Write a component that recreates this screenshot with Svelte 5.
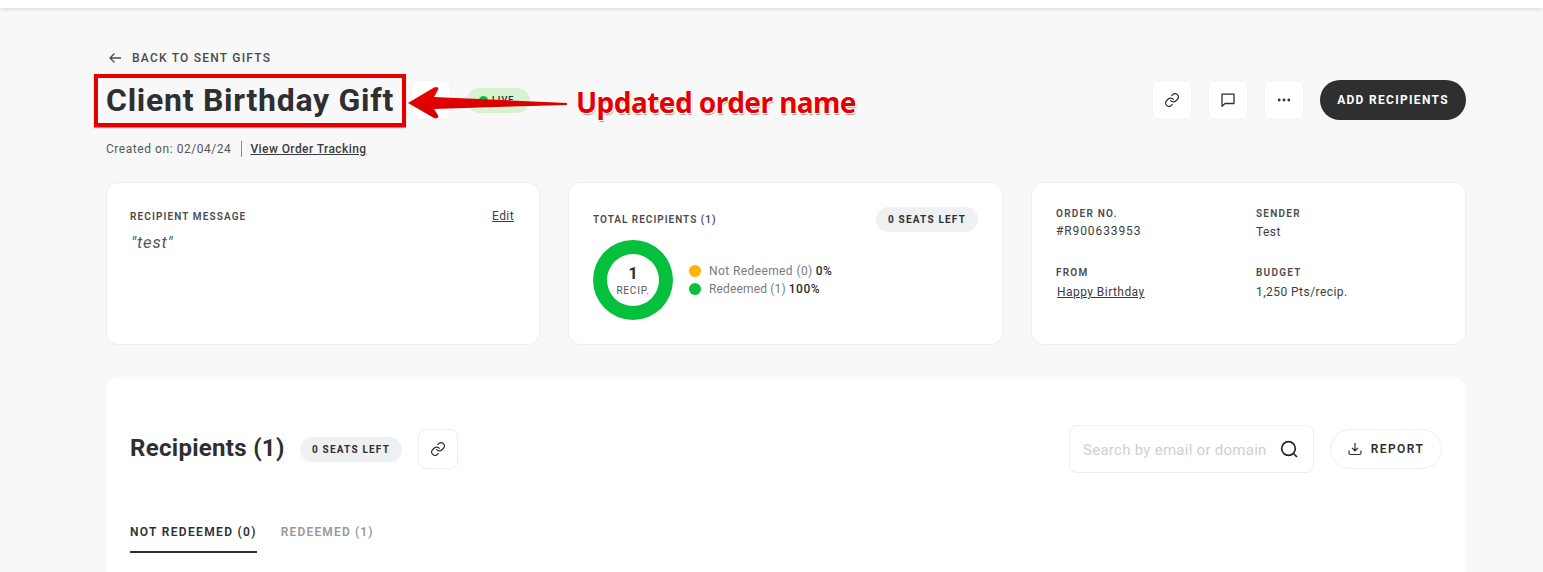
<script>
  const legend = [
    { label: 'Not Redeemed (0)', pct: '0%', color: '#ffb400' },
    { label: 'Redeemed (1)', pct: '100%', color: '#04c03c' }
  ];
</script>

<div class="page">
  <header class="topbar"></header>
  <main class="content">
    <a class="back" href="#back">
      <svg width="14" height="12" viewBox="0 0 14 12" fill="none" stroke="#4a4b4f" stroke-width="1.3"><path d="M13 6H2M6.5 1.5 2 6l4.5 4.5" /></svg>
      <span>BACK TO SENT GIFTS</span>
    </a>

    <div class="title-row">
      <div class="title-left">
        <h1>Client Birthday Gift</h1>
        <button class="icon-btn" aria-label="Edit"></button>
        <span class="live"><i></i>LIVE</span>
      </div>
      <div class="actions">
        <button class="icon-btn" aria-label="Copy link">
          <svg width="16" height="16" viewBox="0 0 24 24" fill="none" stroke="#2e2f31" stroke-width="1.8" stroke-linecap="round"><path d="M10 13a5 5 0 0 0 7.5.5l3-3a5 5 0 0 0-7-7l-1.7 1.7" /><path d="M14 11a5 5 0 0 0-7.5-.5l-3 3a5 5 0 0 0 7 7l1.7-1.7" /></svg>
        </button>
        <button class="icon-btn" aria-label="Comment">
          <svg width="16" height="16" viewBox="0 0 16 16" fill="none" stroke="#2e2f31" stroke-width="1.3" stroke-linejoin="round"><path d="M2 2.200h12v9.300H5L2 14.200z" /></svg>
        </button>
        <button class="icon-btn" aria-label="More">
          <svg width="14" height="4" viewBox="0 0 14 4" fill="#2e2f31"><circle cx="2.2" cy="2" r="1.4" /><circle cx="7" cy="2" r="1.4" /><circle cx="11.8" cy="2" r="1.4" /></svg>
        </button>
        <button class="primary">ADD RECIPIENTS</button>
      </div>
    </div>

    <div class="meta">
      <span class="created">Created on: 02/04/24</span>
      <a href="#track">View Order Tracking</a>
    </div>

    <section class="cards">
      <article class="card message">
        <div class="card-head">
          <span class="label">RECIPIENT MESSAGE</span>
          <a class="edit" href="#edit">Edit</a>
        </div>
        <p>"test"</p>
      </article>

      <article class="card totals">
        <div class="totals-head">
          <span class="label">TOTAL RECIPIENTS (1)</span>
          <span class="pill">0 SEATS LEFT</span>
        </div>
        <div class="chart-row">
          <div class="donut">
            <div class="hole"><b>1</b><small>RECIP.</small></div>
          </div>
          <ul>
            {#each legend as item}
              <li>
                <i style="background:{item.color}"></i>
                <span>{item.label}</span>
                <b>{item.pct}</b>
              </li>
            {/each}
          </ul>
        </div>
      </article>

      <article class="card details">
        <div><span class="label">ORDER NO.</span><p class="order-no">#R900633953</p></div>
        <div><span class="label">SENDER</span><p>Test</p></div>
        <div><span class="label">FROM</span><p><a href="#from">Happy Birthday</a></p></div>
        <div><span class="label">BUDGET</span><p>1,250 Pts/recip.</p></div>
      </article>
    </section>

    <section class="recipients">
      <div class="rec-head">
        <div class="rec-left">
          <h2>Recipients (1)</h2>
          <span class="pill">0 SEATS LEFT</span>
          <button class="icon-btn outlined" aria-label="Copy link">
            <svg width="16" height="16" viewBox="0 0 24 24" fill="none" stroke="#2e2f31" stroke-width="1.8" stroke-linecap="round"><path d="M10 13a5 5 0 0 0 7.5.5l3-3a5 5 0 0 0-7-7l-1.7 1.7" /><path d="M14 11a5 5 0 0 0-7.5-.5l-3 3a5 5 0 0 0 7 7l1.7-1.7" /></svg>
          </button>
        </div>
        <div class="rec-right">
          <label class="search">
            <input placeholder="Search by email or domain" />
            <svg width="20" height="20" viewBox="0 0 20 20" fill="none" stroke="#23262b" stroke-width="1.7"><circle cx="9.5" cy="9.5" r="6.8" /><path d="m14.500 14.500 3.500 3.500" /></svg>
          </label>
          <button class="report">
            <svg width="14" height="14" viewBox="0 0 14 14" fill="none" stroke="#2e2f31" stroke-width="1.2"><path d="M7 1v7.500M4 5.800l3 3 3-3M1 8.500v2.200q0 1.800 1.800 1.800h8.400q1.800 0 1.800-1.800V8.500" /></svg>
            REPORT
          </button>
        </div>
      </div>
      <nav class="tabs">
        <span class="tab active">NOT REDEEMED (0)</span>
        <span class="tab second">REDEEMED (1)</span>
      </nav>
    </section>
  </main>

  <!-- Annotation layer drawn over the screenshot -->
  <div class="note-box"></div>
  <svg class="note-arrow" width="170" height="40" viewBox="0 0 170 40">
    <defs>
      <linearGradient id="arrow-fill" x1="0" y1="0" x2="0" y2="1">
        <stop offset="0" stop-color="#ee0000" />
        <stop offset="1" stop-color="#cf0000" />
      </linearGradient>
    </defs>
    <path d="M1 20 27 4.500q4-1.500 4.500 1.500L27 14 160 20v2L27 26l4.500 7q-.5 3.500-4.500 2z" fill="url(#arrow-fill)" />
  </svg>
  <div class="note-text">Updated order name</div>
</div>

<style>
  :global(body) {
    margin: 0;
    background: #f8f8f8;
  }
  .page {
    position: relative;
    height: 572px;
    overflow: hidden;
    background: #f8f8f8;
    color: #2e2f31;
    font-family: Roboto, "Liberation Sans", sans-serif;
  }
  .topbar {
    height: 8px;
    background: #fff;
    box-shadow: 0 1px 4px rgba(0, 0, 0, 0.14);
  }
  .content {
    padding: 0 77px 0 106px;
  }
  a {
    color: inherit;
  }
  button {
    font-family: inherit;
    cursor: pointer;
  }
  .back {
    display: flex;
    align-items: center;
    gap: 10px;
    height: 16px;
    margin-top: 42px;
    color: #4a4b4f;
    font-size: 12px;
    font-weight: 500;
    letter-spacing: 1.22px;
    text-decoration: none;
    padding-left: 2px;
  }
  .title-row {
    display: flex;
    align-items: center;
    justify-content: space-between;
    height: 40px;
    margin-top: 14px;
  }
  .title-left {
    display: flex;
    align-items: center;
  }
  h1 {
    width: 305px;
    margin: 0;
    font-size: 32px;
    font-weight: 700;
    letter-spacing: 0.72px;
    white-space: nowrap;
  }
  .icon-btn {
    display: flex;
    align-items: center;
    justify-content: center;
    width: 40px;
    height: 40px;
    padding: 0;
    border: 1px solid #f3f3f3;
    border-radius: 8px;
    background: #fff;
  }
  .icon-btn.outlined {
    border-color: #eeeeee;
  }
  .live {
    display: flex;
    align-items: center;
    gap: 4px;
    width: 63px;
    height: 25px;
    margin-left: 16px;
    box-sizing: border-box;
    padding-left: 12px;
    border-radius: 13px;
    background: #d8f3d0;
    font-size: 9px;
    font-weight: 600;
    letter-spacing: 1px;
  }
  .live i {
    width: 9px;
    height: 9px;
    border-radius: 50%;
    background: #04c03c;
  }
  .actions {
    display: flex;
    align-items: center;
    gap: 16px;
  }
  .primary {
    width: 146px;
    height: 40px;
    border: 0;
    border-radius: 20px;
    background: #2e2f31;
    color: #fff;
    font-size: 12px;
    font-weight: 700;
    letter-spacing: 1.3px;
  }
  .meta {
    display: flex;
    align-items: center;
    height: 16px;
    margin-top: 21px;
    font-size: 12px;
    letter-spacing: 0.55px;
    color: #55565a;
  }
  .created {
    padding-right: 10px;
    border-right: 1px solid #8a8a8a;
    line-height: 16px;
  }
  .meta a {
    margin-left: 8px;
    font-weight: 500;
    letter-spacing: 0.42px;
    color: #3c3d40;
  }
  .cards {
    display: grid;
    grid-template-columns: 434px 435px 1fr;
    gap: 28px;
    margin-top: 25px;
  }
  .card {
    box-sizing: border-box;
    height: 163px;
    border: 1px solid #eeeeee;
    border-radius: 12px;
    background: #fff;
  }
  .label {
    color: #4a4b4f;
    font-size: 10px;
    font-weight: 600;
    letter-spacing: 1.25px;
  }
  .message {
    padding: 26px 25px 26px 23px;
  }
  .message .label {
    letter-spacing: 1.12px;
  }
  .card-head {
    display: flex;
    justify-content: space-between;
    align-items: center;
    height: 14px;
  }
  .edit {
    font-size: 12px;
    letter-spacing: 0.4px;
    color: #3c3d40;
  }
  .message p {
    margin: 10px 0 0 1px;
    font-size: 16.5px;
    font-style: italic;
    letter-spacing: 0.85px;
    color: #55565a;
  }
  .totals {
    padding: 24px 24px 0;
  }
  .totals .label {
    letter-spacing: 1px;
  }
  .totals-head {
    display: flex;
    align-items: center;
    justify-content: space-between;
  }
  .pill {
    display: flex;
    align-items: center;
    justify-content: center;
    width: 102px;
    height: 25px;
    border-radius: 13px;
    background: #eff0f2;
    color: #2e2f31;
    font-size: 10px;
    font-weight: 700;
    letter-spacing: 1.2px;
  }
  .chart-row {
    display: flex;
    align-items: center;
    gap: 16px;
    margin-top: 8px;
  }
  .donut {
    display: flex;
    align-items: center;
    justify-content: center;
    width: 80px;
    height: 80px;
    border-radius: 50%;
    background: #04c03c;
  }
  .hole {
    display: flex;
    flex-direction: column;
    align-items: center;
    justify-content: center;
    width: 52px;
    height: 52px;
    border-radius: 50%;
    background: #fff;
  }
  .hole b {
    font-size: 16px;
    line-height: 18px;
    font-weight: 700;
    padding-top: 1px;
  }
  .hole small {
    margin-top: 1px;
    font-size: 10px;
    line-height: 13px;
    letter-spacing: 0.8px;
    color: #55565a;
  }
  ul {
    margin: 0;
    padding: 0 0 1px;
    list-style: none;
  }
  li {
    display: flex;
    align-items: center;
    height: 18px;
    font-size: 12px;
    letter-spacing: 0.4px;
    color: #7a7b80;
  }
  li i {
    width: 12px;
    height: 12px;
    margin-right: 8px;
    border-radius: 50%;
  }
  li b {
    margin-left: 3px;
    font-weight: 500;
    letter-spacing: 0.55px;
    color: #2e2f31;
  }
  li:last-child span {
    letter-spacing: 0.15px;
  }
  .details {
    display: grid;
    grid-template-columns: 200px 1fr;
    grid-auto-rows: 59px;
    padding: 24px 24px 0;
  }
  .details .label {
    display: block;
    line-height: 14px;
  }
  .details p {
    margin: 3px 0 0;
    font-size: 12px;
    letter-spacing: 0.45px;
    line-height: 16px;
    color: #3c3d40;
  }
  .details div:nth-child(n + 3) p {
    margin-top: 4px;
  }
  .details .order-no {
    margin-top: 2px;
    letter-spacing: 0.9px;
  }
  .details p a {
    margin-left: 1px;
  }
  .recipients {
    box-sizing: border-box;
    height: 300px;
    margin-top: 32px;
    padding: 48px 24px 0;
    border-radius: 12px;
    background: #fff;
  }
  .rec-head {
    display: flex;
    align-items: center;
    justify-content: space-between;
    height: 48px;
  }
  .rec-left {
    display: flex;
    align-items: center;
  }
  h2 {
    width: 170px;
    margin: 0 0 3px;
    font-size: 24px;
    font-weight: 700;
    letter-spacing: 0.3px;
    white-space: nowrap;
  }
  .rec-left .icon-btn {
    margin-left: 16px;
  }
  .rec-right {
    display: flex;
    align-items: center;
    gap: 16px;
  }
  .search {
    box-sizing: border-box;
    display: flex;
    align-items: center;
    width: 245px;
    height: 48px;
    padding: 0 14px 0 13px;
    border: 1px solid #eeeeee;
    border-radius: 8px;
  }
  .search input {
    flex: 1;
    min-width: 0;
    padding: 1px 0 0;
    border: 0;
    outline: 0;
    background: none;
    font-family: inherit;
    font-size: 15px;
    letter-spacing: 0.27px;
  }
  .search input::placeholder {
    color: #cfcfd1;
    opacity: 1;
  }
  .report {
    display: flex;
    align-items: center;
    justify-content: center;
    gap: 9px;
    width: 112px;
    height: 40px;
    border: 1px solid #eeeeee;
    border-radius: 20px;
    background: #fff;
    color: #2e2f31;
    font-size: 12px;
    font-weight: 600;
    letter-spacing: 1.4px;
  }
  .tabs {
    display: flex;
    gap: 24px;
    margin-top: 51px;
  }
  .tab {
    padding-bottom: 11px;
    color: #98999c;
    font-size: 12px;
    font-weight: 600;
    line-height: 16px;
    letter-spacing: 1.33px;
  }
  .tab.second {
    letter-spacing: 1.15px;
  }
  .tab.active {
    color: #2e2f31;
    border-bottom: 2px solid #2e2f31;
  }
  .note-box {
    position: absolute;
    left: 94px;
    top: 74px;
    width: 312px;
    height: 53px;
    box-sizing: border-box;
    border: 4px solid #e30000;
    box-shadow: 0 1px 1px rgba(0, 0, 0, 0.4);
  }
  .note-arrow {
    position: absolute;
    left: 407px;
    top: 83px;
    filter: drop-shadow(0 1px 0.5px rgba(255, 255, 255, 0.6));
  }
  .note-text {
    position: absolute;
    left: 576px;
    top: 83px;
    color: #e30000;
    font-family: "Noto Sans", sans-serif;
    font-size: 28px;
    font-weight: 700;
    letter-spacing: -0.55px;
    line-height: 38px;
    white-space: nowrap;
    text-shadow: 1px 1px 0 #fff, -1px -1px 0 #fff, 1px -1px 0 #fff, -1px 1px 0 #fff, 1px 2px 1px #9a9a9a;
  }
</style>
